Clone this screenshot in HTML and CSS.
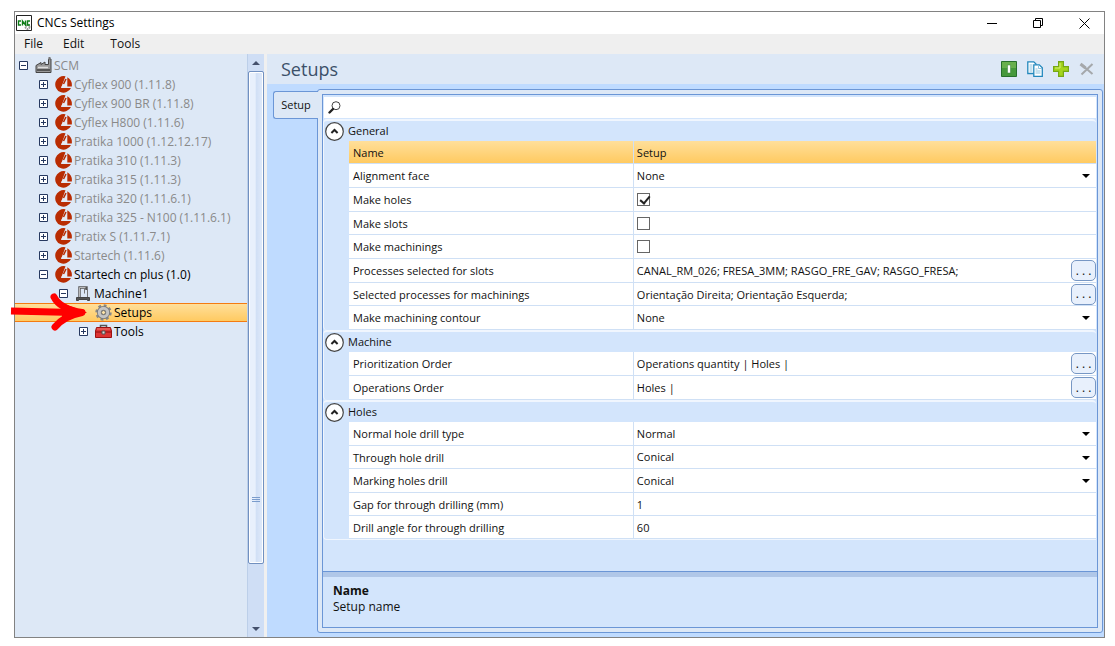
FILE: index.html
```html
<!DOCTYPE html>
<html lang="en">
<head>
<meta charset="utf-8">
<title>CNCs Settings</title>
<link rel="stylesheet" href="styles.css">
</head>
<body>
<svg class="defs" aria-hidden="true">
  <symbol id="brand" viewBox="0 0 17 17">
    <path d="M10.500.3A8.300 8.300 0 1 0 16 12H6Z" fill="#b92c02"/>
    <path d="M12.300 1.200V10.500H16.800Q17.500 4 12.300 1.200Z" fill="#b92c02"/>
    <path d="M6 11.500 11 4l1 6.500v1Z" fill="#e6eaf2"/>
    <path d="M11 3 8.500 8" stroke="#b92c02" stroke-width="1.600"/>
  </symbol>
  <symbol id="plus" viewBox="0 0 9 9">
    <path d="M.5.5h8v8h-8Z" fill="#fff" stroke="#26385f"/><path d="M2 4.5h5M4.5 2v5" stroke="#26385f"/>
  </symbol>
  <symbol id="minus" viewBox="0 0 9 9">
    <path d="M.5.5h8v8h-8Z" fill="#fff" stroke="#26385f"/><path d="M2 4.5h5" stroke="#26385f"/>
  </symbol>
  <symbol id="collapse" viewBox="0 0 19 19">
    <circle cx="9.5" cy="9.5" r="8.8" fill="#fff" stroke="#444" stroke-width="1.2"/>
    <path d="m6.400 11 3.100-3 3.100 3" fill="none" stroke="#222" stroke-width="2"/>
  </symbol>
  <symbol id="caret" viewBox="0 0 8 4"><path d="M0 0h8L4 4Z"/></symbol>
</svg>

<div class="window">
  <header class="titlebar">
    <svg class="app-icon" viewBox="0 0 16 16"><path d="M.5.5h15v15H.5Z" fill="#fff" stroke="#222"/><circle cx="11.500" cy="12" r="2" fill="none" stroke="#999" stroke-width="1.800" stroke-dasharray="1.500 .6"/><path d="M5 6H2.500v4H5M6.500 10.500V6l3 4V5.500M14 6h-2.500v4H14" fill="none" stroke="#0d7d17" stroke-width="1.400"/></svg>
    <h1 class="title">CNCs Settings</h1>
    <button class="win-btn" aria-label="Minimize"><svg viewBox="0 0 11 11"><path d="M0 5.500h10"/></svg></button>
    <button class="win-btn" aria-label="Restore"><svg viewBox="0 0 11 11"><path d="M.5 2.500h7v7h-7ZM2.500 2.500v-2h7v7h-2"/></svg></button>
    <button class="win-btn" aria-label="Close"><svg viewBox="0 0 11 11"><path d="m.5.5 10 10M10.500.5l-10 10"/></svg></button>
  </header>
  <nav class="menubar">
    <button>File</button><button>Edit</button><button>Tools</button>
  </nav>
  <div class="body">
    <aside class="side">
      <ul class="tree">
        <li class="node muted"><button class="exp" aria-label="Collapse"><svg><use href="#minus"/></svg></button><svg class="ico" viewBox="0 0 17 17"><path d="M1 8.500 6 5.500v2l4-2.500v2.500h3.500V2h2.500v13.500H1Z" fill="#999" stroke="#444"/><path d="M14.500 0v3" stroke="#777" stroke-width="2"/><path d="M3 10.500h10" stroke="#ddd" stroke-width="1.500"/><path d="M2 13h13" stroke="#555" stroke-width="2"/></svg><span>SCM</span></li>
        <li class="node muted l1"><button class="exp" aria-label="Expand"><svg><use href="#plus"/></svg></button><svg class="ico"><use href="#brand"/></svg><span>Cyflex 900 (1.11.8)</span></li>
        <li class="node muted l1"><button class="exp" aria-label="Expand"><svg><use href="#plus"/></svg></button><svg class="ico"><use href="#brand"/></svg><span>Cyflex 900 BR (1.11.8)</span></li>
        <li class="node muted l1"><button class="exp" aria-label="Expand"><svg><use href="#plus"/></svg></button><svg class="ico"><use href="#brand"/></svg><span>Cyflex H800 (1.11.6)</span></li>
        <li class="node muted l1"><button class="exp" aria-label="Expand"><svg><use href="#plus"/></svg></button><svg class="ico"><use href="#brand"/></svg><span>Pratika 1000 (1.12.12.17)</span></li>
        <li class="node muted l1"><button class="exp" aria-label="Expand"><svg><use href="#plus"/></svg></button><svg class="ico"><use href="#brand"/></svg><span>Pratika 310 (1.11.3)</span></li>
        <li class="node muted l1"><button class="exp" aria-label="Expand"><svg><use href="#plus"/></svg></button><svg class="ico"><use href="#brand"/></svg><span>Pratika 315 (1.11.3)</span></li>
        <li class="node muted l1"><button class="exp" aria-label="Expand"><svg><use href="#plus"/></svg></button><svg class="ico"><use href="#brand"/></svg><span>Pratika 320 (1.11.6.1)</span></li>
        <li class="node muted l1"><button class="exp" aria-label="Expand"><svg><use href="#plus"/></svg></button><svg class="ico"><use href="#brand"/></svg><span>Pratika 325 - N100 (1.11.6.1)</span></li>
        <li class="node muted l1"><button class="exp" aria-label="Expand"><svg><use href="#plus"/></svg></button><svg class="ico"><use href="#brand"/></svg><span>Pratix S (1.11.7.1)</span></li>
        <li class="node muted l1"><button class="exp" aria-label="Expand"><svg><use href="#plus"/></svg></button><svg class="ico"><use href="#brand"/></svg><span>Startech (1.11.6)</span></li>
        <li class="node l1"><button class="exp" aria-label="Collapse"><svg><use href="#minus"/></svg></button><svg class="ico"><use href="#brand"/></svg><span>Startech cn plus (1.0)</span></li>
        <li class="node l2"><button class="exp" aria-label="Collapse"><svg><use href="#minus"/></svg></button><svg class="ico" viewBox="0 0 17 17"><path d="M4.500 12V2.500h7V5" fill="none" stroke="#555" stroke-width="2.400"/><path d="M4.500 12V2.500h6" fill="none" stroke="#bbb"/><path d="M9.500 3v5.500M12.500 4v8" stroke="#777"/><path d="M1.500 15.500V12.500h13v3h-2v-1h-9v1Z" fill="#555" stroke="#444"/></svg><span>Machine1</span></li>
        <li class="node l3 selected"><span class="exp"></span><svg class="ico" viewBox="0 0 17 17"><circle cx="8.500" cy="8.500" r="6.700" fill="none" stroke="#888" stroke-width="3" stroke-dasharray="2.700 2.560"/><circle cx="8.500" cy="8.500" r="4.200" fill="none" stroke="#7a7a7a" stroke-width="4.800"/><circle cx="8.500" cy="8.500" r="4.200" fill="none" stroke="#c4c4c4" stroke-width="3"/><circle cx="8.500" cy="8.500" r="2" fill="#fde3a6" stroke="#777"/></svg><span>Setups</span></li>
        <li class="node l3"><button class="exp" aria-label="Expand"><svg><use href="#plus"/></svg></button><svg class="ico" viewBox="0 0 17 17"><path d="M5.500 4V2.500h6V4" fill="none" stroke="#555" stroke-width="1.500"/><path d="M1.500 4.500h14l1 3.500v6.500H.5V8Z" fill="#d33" stroke="#9c1111"/><path d="M1 9h15" stroke="#8c1010"/><path d="M2 6h13" stroke="#ee7b73"/><path d="M7 8h3v3H7Z" fill="#ddd" stroke="#555"/></svg><span>Tools</span></li>
      </ul>
      <div class="scroll">
        <button class="scroll-btn" aria-label="Scroll up"><svg class="up" viewBox="0 0 8 4"><use href="#caret"/></svg></button>
        <div class="thumb"><i></i><i></i><i></i></div>
        <div class="rest"></div>
        <button class="scroll-btn" aria-label="Scroll down"><svg viewBox="0 0 8 4"><use href="#caret"/></svg></button>
      </div>
      <svg class="pointer" viewBox="0 0 80 38" aria-hidden="true"><path d="M3 18 66 19.500" fill="none" stroke="#f00" stroke-width="7"/><path d="M46 4Q52 16 74 19.500Q56 23 47 34" fill="none" stroke="#f00" stroke-width="7" stroke-linecap="round" stroke-linejoin="round"/><path d="m54 10 25 9.500-25 10Z" fill="#f00"/></svg>
    </aside>
    <main class="main">
      <div class="head">
        <h2>Setups</h2>
        <div class="tools">
          <button aria-label="Enable"><svg viewBox="0 0 16 16"><path d="M.5.5h15v15H.5Z" fill="#46993c" stroke="#27702d"/><path d="M1 1h14v6H1Z" fill="#68b04e"/><path d="M6.500 4h3v8h-3Z" fill="#fff" stroke="#34823a" stroke-width=".5"/></svg></button>
          <button aria-label="Copy"><svg viewBox="0 0 16 16"><path d="M.8.8h6L9 3v9.500H.8Z" fill="#fff" stroke="#2388bd" stroke-width="1.300"/><path d="M2.500 4h3M2.500 6h3M2.500 8h3M2.500 10h3" stroke="#8dc3df"/><path d="M6.800 3.800h5.500l3 3v8.500H6.800Z" fill="#fff" stroke="#2388bd" stroke-width="1.300"/><path d="M11.500 4v3.500H15M8.500 8h2M8.500 10h5M8.500 12h5" fill="none" stroke="#8dc3df"/></svg></button>
          <button aria-label="Add"><svg viewBox="0 0 16 16"><path d="M5.600.6h4.800v5h5v4.800h-5v5H5.600v-5h-5V5.600h5Z" fill="#a5d51d" stroke="#76a815" stroke-width="1.200"/><path d="M7 2v5H2" fill="none" stroke="#d6f077"/></svg></button>
          <button aria-label="Delete"><svg viewBox="0 0 16 16"><path d="M2.500 3.500 13.500 13M13.500 3 2.500 13.500" fill="none" stroke="#a5a8ab" stroke-width="2"/><path d="m1.500 3 5 4" stroke="#a5a8ab" stroke-width="3"/></svg></button>
        </div>
      </div>
      <div class="content">
        <button class="tab">Setup</button>
        <section class="panel">
          <div class="inner">
            <label class="search"><svg viewBox="0 0 13 13"><circle cx="8" cy="4.700" r="4" fill="#fff" stroke="#444"/><path d="M5 8 1.500 11.500" stroke="#222" stroke-width="2.400" stroke-linecap="round"/></svg><input type="text" aria-label="Search"></label>
            <div class="groups">
              <section class="group">
                <h3><button aria-label="Collapse General"><svg><use href="#collapse"/></svg></button>General</h3>
                <div class="row short active"><label for="name">Name</label><div class="val"><input id="name" type="text" value="Setup"></div></div>
                <div class="row"><label for="face">Alignment face</label><div class="val"><select id="face"><option>None</option></select><svg class="caret"><use href="#caret"/></svg></div></div>
                <div class="row"><label for="mh">Make holes</label><div class="val"><input id="mh" type="checkbox" checked></div></div>
                <div class="row short"><label for="ms">Make slots</label><div class="val"><input id="ms" type="checkbox"></div></div>
                <div class="row"><label for="mm">Make machinings</label><div class="val"><input id="mm" type="checkbox"></div></div>
                <div class="row"><label for="ps">Processes selected for slots</label><div class="val"><input id="ps" type="text" value="CANAL_RM_026; FRESA_3MM; RASGO_FRE_GAV; RASGO_FRESA;"><button class="more" aria-label="Choose processes for slots">. . .</button></div></div>
                <div class="row short"><label for="pm">Selected processes for machinings</label><div class="val"><input id="pm" type="text" value="Orientação Direita; Orientação Esquerda;"><button class="more" aria-label="Choose processes for machinings">. . .</button></div></div>
                <div class="row"><label for="mc">Make machining contour</label><div class="val"><select id="mc"><option>None</option></select><svg class="caret"><use href="#caret"/></svg></div></div>
              </section>
              <section class="group">
                <h3><button aria-label="Collapse Machine"><svg><use href="#collapse"/></svg></button>Machine</h3>
                <div class="row"><label for="po">Prioritization Order</label><div class="val"><input id="po" type="text" value="Operations quantity | Holes |"><button class="more" aria-label="Choose prioritization order">. . .</button></div></div>
                <div class="row"><label for="oo">Operations Order</label><div class="val"><input id="oo" type="text" value="Holes |"><button class="more" aria-label="Choose operations order">. . .</button></div></div>
              </section>
              <section class="group">
                <h3><button aria-label="Collapse Holes"><svg><use href="#collapse"/></svg></button>Holes</h3>
                <div class="row"><label for="nh">Normal hole drill type</label><div class="val"><select id="nh"><option>Normal</option></select><svg class="caret"><use href="#caret"/></svg></div></div>
                <div class="row short"><label for="th">Through hole drill</label><div class="val"><select id="th"><option>Conical</option></select><svg class="caret"><use href="#caret"/></svg></div></div>
                <div class="row"><label for="mk">Marking holes drill</label><div class="val"><select id="mk"><option>Conical</option></select><svg class="caret"><use href="#caret"/></svg></div></div>
                <div class="row short"><label for="gap">Gap for through drilling (mm)</label><div class="val"><input id="gap" type="text" value="1"></div></div>
                <div class="row short"><label for="ang">Drill angle for through drilling</label><div class="val"><input id="ang" type="text" value="60"></div></div>
              </section>
            </div>
            <div class="desc"><strong>Name</strong><p>Setup name</p></div>
          </div>
        </section>
      </div>
    </main>
  </div>
</div>
</body>
</html>
```

FILE: styles.css
```css
* { box-sizing: border-box; }
body {
  margin: 0;
  padding: 11px 10px 8px 14px;
  height: 100vh;
  background: #fff;
  color: #111;
  font: 12px/16px "Open Sans", "Noto Sans", sans-serif;
}
h1, h2, h3, p, ul { margin: 0; padding: 0; font-weight: 400; }
button, input, select { font: inherit; color: inherit; margin: 0; padding: 0; border: 0; background: none; }
svg { display: block; }
.defs { position: absolute; width: 0; height: 0; }

.window { display: flex; flex-direction: column; height: 100%; border: 1px solid #828282; }
.titlebar { display: flex; align-items: center; height: 22px; flex: none; }
.app-icon { width: 16px; height: 16px; margin: 0 5px 0 1px; }
.title { flex: 1; font-size: 12px; color: #000; }
.win-btn { width: 46px; height: 20px; padding-left: 6px; display: grid; place-items: center; }
.win-btn svg { width: 11px; height: 11px; fill: none; stroke: #000; }
.menubar { display: flex; gap: 20px; height: 20px; flex: none; padding-left: 9px; background: #efefef; }
.menubar button:last-child { margin-left: 6px; }

.body { display: flex; flex: 1; min-height: 0; background: #f0f0f0; }
.side { position: relative; display: flex; width: 249px; flex: none; background: #dde8f6; }
.tree { flex: 1; padding-top: 2px; list-style: none; }
.node { display: flex; align-items: center; height: 19px; padding-left: 4px; white-space: nowrap; color: #000; }
.muted { color: #8a8a8a; }
.l1 { padding-left: 24px; }
.l2 { padding-left: 44px; }
.l3 { padding-left: 64px; }
.exp { width: 9px; height: 9px; flex: none; margin-right: 7px; }
.exp svg { width: 9px; height: 9px; }
.ico { width: 17px; height: 17px; flex: none; margin-right: 2px; }
.selected { border: solid #f47b11; border-width: 1px 0; background: linear-gradient(#ffdf9a, #ffca61); }
.pointer { position: absolute; left: -7px; top: 239px; width: 80px; height: 38px; }

.scroll { display: flex; flex-direction: column; width: 17px; flex: none; background: #cfdef5; border-left: 1px solid #bccfe9; }
.scroll-btn { height: 17px; display: grid; place-items: center; flex: none; color: #44506c; fill: currentColor; }
.scroll-btn svg { width: 8px; height: 4px; }
.up { transform: rotate(180deg); }
.thumb { flex: 493; display: flex; flex-direction: column; justify-content: flex-end; align-items: center; gap: 1px; padding-bottom: 61px; border: 1px solid #7190c0; border-radius: 2px; box-shadow: inset 0 0 0 1px #fff; background: linear-gradient(90deg, #e8f0fc 45%, #d0dff5 50%, #e0eafa); }
.thumb i { width: 8px; height: 1px; background: #7a9ccc; }
.rest { flex: 64; }

.main { display: flex; flex-direction: column; flex: 1; min-width: 0; margin-left: 3px; background: #bfdbff; }
.head { display: flex; align-items: center; justify-content: space-between; height: 30px; flex: none; padding: 0 9px 0 14px; background: #dde8f6; }
.head h2 { font-size: 18px; line-height: 24px; color: #3b5069; }
.tools { display: flex; gap: 10px; }
.tools button, .tools svg { width: 16px; height: 16px; }
.content { display: flex; align-items: flex-start; flex: 1; min-height: 0; padding: 5px 1px 4px 6px; }
.tab { position: relative; z-index: 1; width: 45px; height: 28px; flex: none; margin: 2px -1px 0 0; font-size: 11px; background: #dde8f6; border: 1px solid #6b96d6; border-right: 0; border-radius: 3px 0 0 3px; }
.panel { align-self: stretch; flex: 1; min-width: 0; padding: 4px; background: #dde8f6; border: 1px solid #6b96d6; border-radius: 3px; }
.inner { display: flex; flex-direction: column; height: 100%; padding: 2px 0 0; background: #d3e5fc; border: 1px solid #6b96d6; font-size: 11px; }
.search { display: flex; align-items: center; height: 21px; flex: none; margin: 0 1px; padding-left: 4px; background: #fff; }
.search svg { width: 13px; height: 13px; }
.search input { flex: 1; margin-left: 4px; outline: 0; }

.groups { flex: 1; margin: 1px 1px 0 0; }
.group { border-top: 2px solid #f0f6fe; border-left: 1px solid #f0f6fe; border-radius: 4px 4px 0 4px; }
.group:last-child { border-bottom: 1px solid #f0f6fe; }
.group h3 { display: flex; align-items: center; gap: 4px; height: 20px; font-size: 11px; padding-left: 1px; }
.group h3 button, .group h3 svg { width: 19px; height: 19px; }
.row { display: flex; height: 24px; margin-left: 25px; background: #fff; border-bottom: 1px solid #cfe0f5; }
.short { height: 23px; }
.row label { width: 38%; flex: none; padding: 4px; }
.val { position: relative; display: flex; align-items: center; flex: 1; min-width: 0; padding-left: 3px; border-left: 1px solid #cfe0f5; }
.val input[type="text"], .val select { flex: 1; min-width: 0; height: 20px; appearance: none; outline: 0; }
.active { background: linear-gradient(#ffdf9a, #ffca61); }
.caret { position: absolute; right: 6px; top: 10px; width: 8px; height: 4px; pointer-events: none; }
.val input[type="checkbox"] { appearance: none; width: 13px; height: 13px; border: 1px solid #666; background: #fff; }
.val input:checked::after { content: ""; display: block; width: 4px; height: 8px; margin: 0 0 0 4px; border: solid #222; border-width: 0 2px 2px 0; transform: rotate(40deg); }
.more { width: 25px; height: 21px; flex: none; border: 1px solid #7797c4; border-radius: 5px; background: #e8f0fc; font-size: 12px; }
.desc { height: 56px; flex: none; padding: 11px 10px 0; border-top: 1px solid #6b96d6; box-shadow: inset 0 5px #b0c7e8; font-size: 12px; }
.desc strong { display: block; font-weight: 700; }
```
